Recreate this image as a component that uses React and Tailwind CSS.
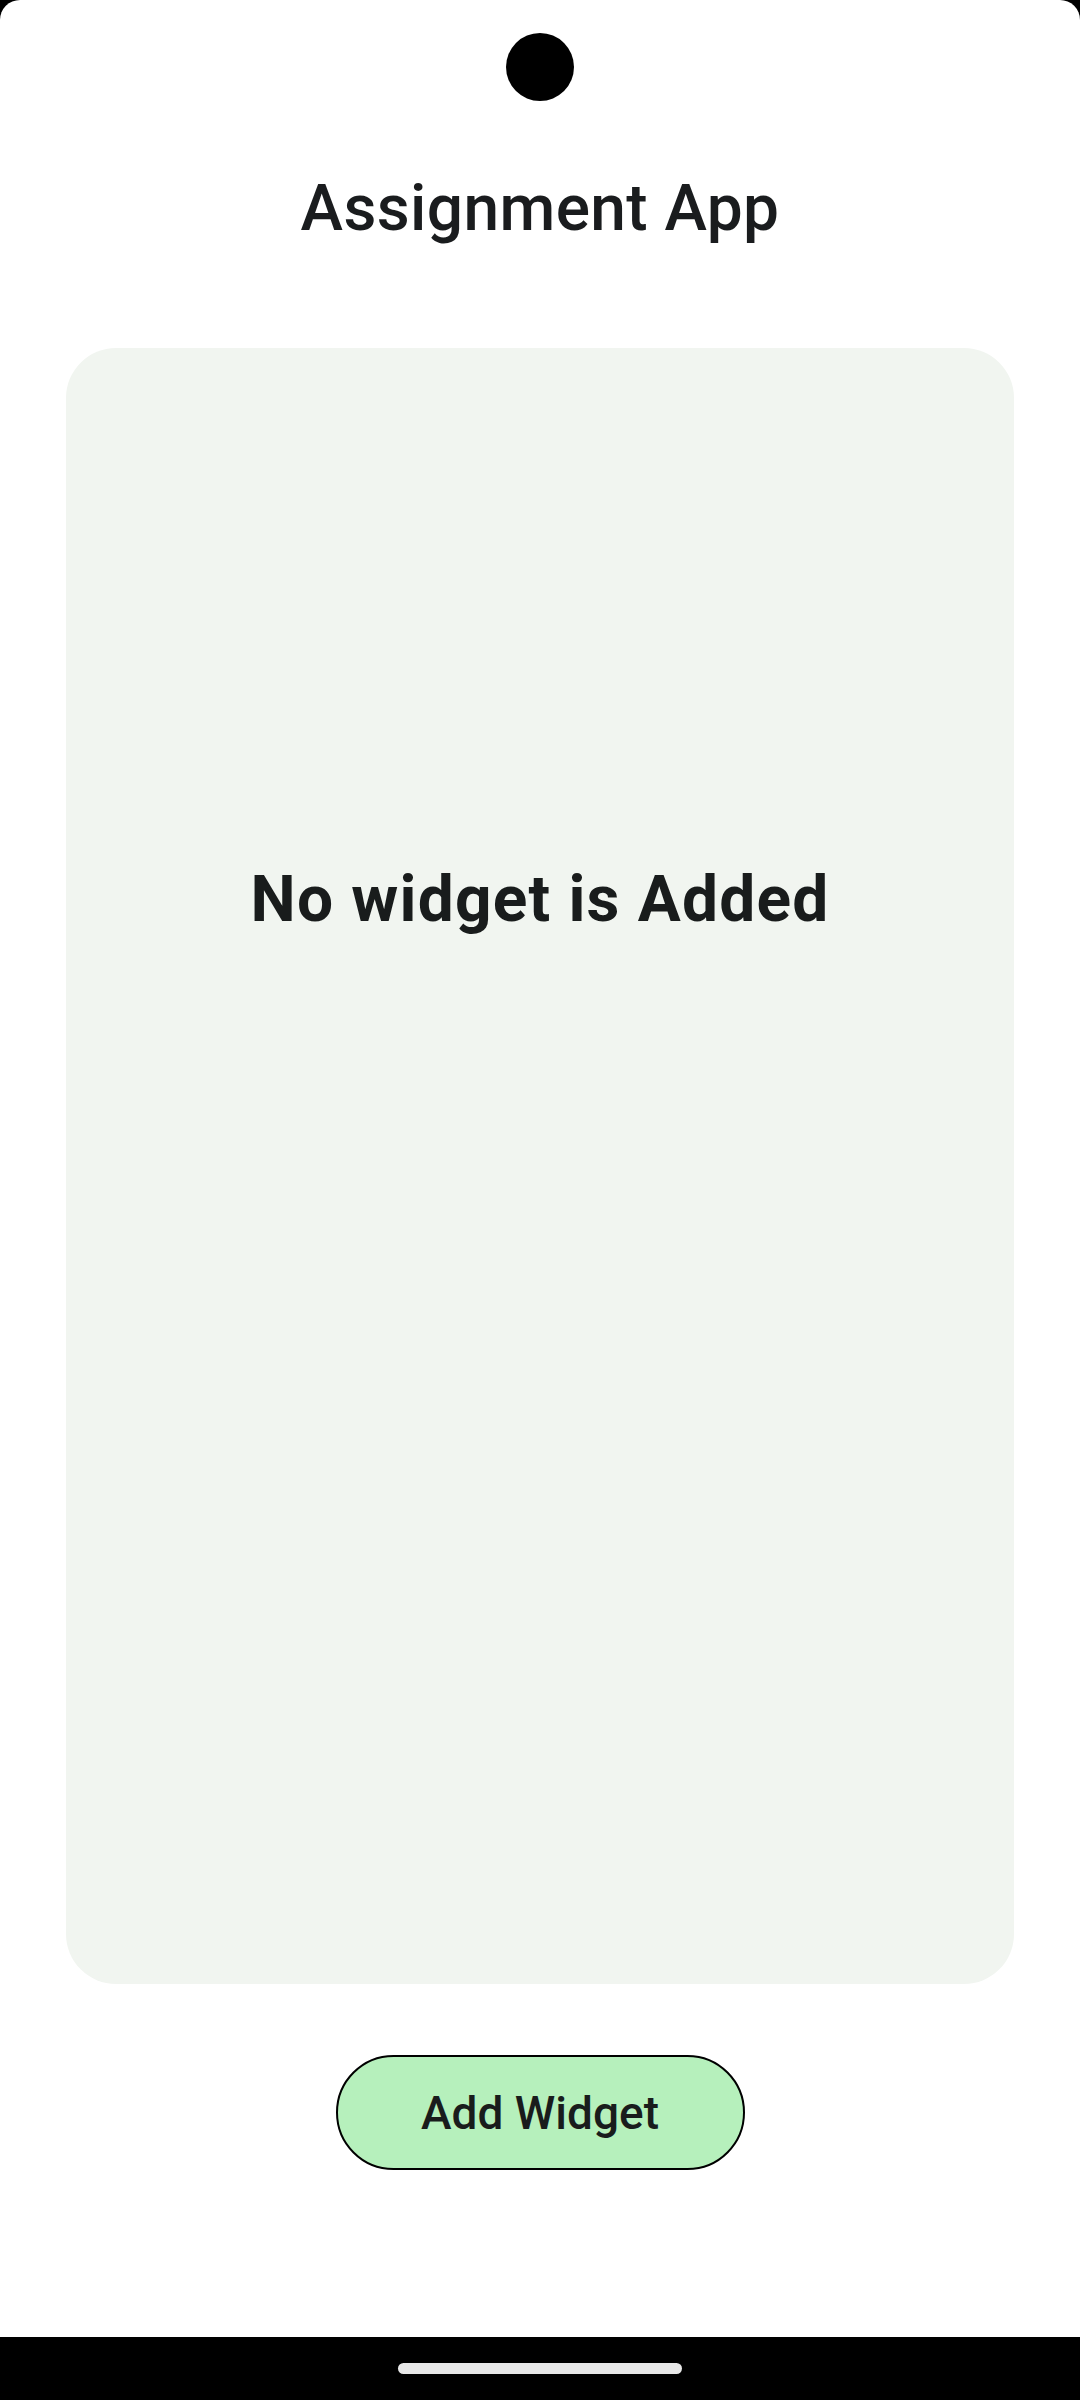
export default function App() {
  return (
    <div className="w-[1080px] h-[2400px] bg-black flex flex-col" style={{ fontFamily: "Roboto, 'Noto Sans', sans-serif" }}>
      <div className="relative h-[2337px] bg-white rounded-t-[20px] flex flex-col items-center">
        <div className="absolute top-[33px] left-1/2 -translate-x-1/2 w-[68px] h-[68px] rounded-full bg-black" />
        <h1 className="mt-[177px] text-[64px] leading-[64px] font-medium text-[#1a1c1e] tracking-[0.4px]">Assignment App</h1>
        <div className="mt-[107px] w-[948px] h-[1636px] rounded-[50px] bg-[#f1f5f0] flex flex-col items-center">
          <p className="mt-[520px] text-[64px] leading-[64px] font-bold text-[#191c1c] tracking-[1.2px]">No widget is Added</p>
        </div>
        <button className="mt-[71px] w-[409px] h-[115px] rounded-full border-2 border-black bg-[#b6f0bc] flex items-center justify-center text-[46px] leading-[46px] font-medium text-[#191c1c]">
          Add Widget
        </button>
      </div>
      <div className="flex-1 flex items-start justify-center pt-[26px]">
        <div className="w-[284px] h-[11px] rounded-full bg-[#e8e8e8]" />
      </div>
    </div>
  );
}
